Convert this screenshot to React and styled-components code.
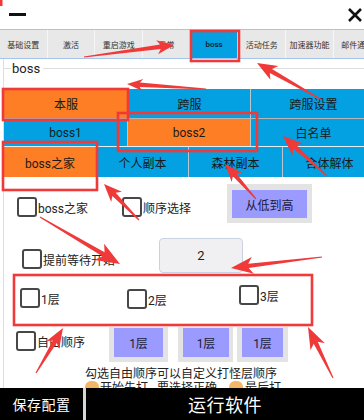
import React from "react";
import styled, { createGlobalStyle } from "styled-components";

const GlobalStyle = createGlobalStyle`
  html, body {
    margin: 0;
    padding: 0;
    background: #fff;
  }
  body {
    font-family: Roboto, "Noto Sans CJK SC", sans-serif;
    color: #222;
  }
`;

const RED = "#f03a3a";
const ORANGE = "#fd7e24";
const BLUE = "#03a0e2";
const PURPLE = "#9a9aff";

const Screen = styled.div`
  position: relative;
  width: 364px;
  height: 420px;
  overflow: hidden;
  display: flex;
  flex-direction: column;
  background: #fff;
`;

const TitleBar = styled.div`
  height: 29px;
  flex: 0 0 29px;
  display: flex;
  align-items: center;
  justify-content: space-between;
  padding: 0 1px 0 9px;
  box-sizing: border-box;
`;

const Minimize = styled.span`
  width: 17px;
  height: 3px;
  margin-top: 0;
  background: #111;
`;

const TabBar = styled.div`
  flex: 0 0 30px;
  height: 30px;
  box-sizing: border-box;
  display: flex;
  background: #e8e8e8;
  border-top: 1px solid #a6c4f0;
  border-bottom: 1px solid #a6c4f0;
  overflow: hidden;
`;

const Tab = styled.div`
  flex: 0 0 47.7px;
  box-sizing: border-box;
  display: flex;
  align-items: center;
  justify-content: center;
  white-space: nowrap;
  font-size: 8px;
  color: #333;
  border-right: 1px solid #f6f6f6;
  background: ${(p) => (p.$active ? BLUE : "transparent")};
  font-weight: ${(p) => (p.$active ? 600 : 400)};
  color: ${(p) => (p.$active ? "#10243a" : "#333")};
`;

const Body = styled.div`
  flex: 1;
  overflow: hidden;
  padding-left: 3px;
`;

const Group = styled.div`
  width: 372px;
  min-height: 100%;
  border-left: 1px solid #dedede;
`;

const Legend = styled.div`
  height: 18px;
  display: flex;
  align-items: center;
  font-size: 13px;
  color: #222;

  &::before {
    content: "";
    width: 7px;
    height: 1px;
    background: #dedede;
  }
  &::after {
    content: "";
    flex: 1;
    height: 1px;
    background: #dedede;
  }
  span {
    padding: 0 3px 0 1px;
  }
`;

const SegRow = styled.div`
  display: grid;
  grid-template-columns: ${(p) => p.$cols};
  height: ${(p) => p.$h}px;
  margin-top: ${(p) => p.$mt || 0}px;
  border-bottom: 1px solid ${(p) => p.$line || "#c8d0d4"};
`;

const Seg = styled.div`
  display: flex;
  align-items: center;
  justify-content: center;
  font-size: 12px;
  color: #1a1a1a;
  background: ${(p) => (p.$on ? ORANGE : BLUE)};
  border-left: ${(p) => (p.$first ? "none" : "1px solid #b9c6cc")};
  white-space: nowrap;
`;

const OptionRow = styled.div`
  display: grid;
  grid-template-columns: ${(p) => p.$cols};
  align-items: start;
  margin-top: ${(p) => p.$mt}px;
  padding-left: ${(p) => p.$pl}px;
`;

const CheckItem = styled.label`
  display: flex;
  align-items: center;
  gap: 1px;
  margin-top: ${(p) => p.$mt || 0}px;
  font-size: 12px;
  color: #222;
  white-space: nowrap;
`;

const Box = styled.span`
  width: 20px;
  height: 20px;
  box-sizing: border-box;
  border: 2px solid #474747;
  border-radius: 3px;
  background: #fff;
  flex: 0 0 auto;
`;

const ActionButton = styled.div`
  width: ${(p) => p.$w}px;
  margin-left: ${(p) => p.$ml || 0}px;
  padding: ${(p) => p.$pad};
  background: #e3e3e3;
  box-sizing: content-box;

  div {
    height: ${(p) => p.$h}px;
    display: flex;
    align-items: center;
    justify-content: center;
    background: ${PURPLE};
    font-size: 12px;
    color: #1b1b3a;
  }
`;

const NumberField = styled.div`
  width: 84px;
  height: 35px;
  box-sizing: border-box;
  display: flex;
  align-items: center;
  justify-content: center;
  background: #f0f0f2;
  border: 1px solid #c8d2e2;
  border-radius: 4px;
  font-size: 13px;
  color: #222;
`;

const FloorArea = styled.div`
  width: 298px;
  height: 50px;
  margin: 2px 0 0 10px;
  display: grid;
  grid-template-columns: 107px 112px 1fr;
  align-items: start;
  padding-left: 6px;
  box-sizing: border-box;
`;

const OrderRow = styled.div`
  display: flex;
  align-items: flex-start;
  margin-top: 2px;
  padding-left: 12px;
`;

const Note = styled.div`
  margin: 5px 0 0 81px;
  font-size: 12px;
  line-height: 14px;
  color: #222;
  white-space: nowrap;
`;

const Hand = styled.span`
  display: inline-block;
  width: 14px;
  height: 12px;
  margin: 0 ${(p) => p.$mr || 1}px 0 ${(p) => p.$ml || 0}px;
  vertical-align: -1px;
  border-radius: 6px 6px 2px 2px;
  background: #f2b766;
`;

const Gap = styled.span`
  display: inline-block;
  width: ${(p) => p.$w}px;
`;

const BottomBar = styled.div`
  flex: 0 0 32px;
  display: flex;
  gap: 3px;
  background: #d6d6d6;
`;

const BottomButton = styled.div`
  flex: ${(p) => (p.$grow ? "1" : "0 0 83px")};
  display: flex;
  align-items: center;
  justify-content: center;
  background: #000;
  color: #fff;
  font-size: ${(p) => p.$fs}px;
  letter-spacing: 0.5px;
`;

const Overlay = styled.svg`
  position: absolute;
  left: 0;
  top: 0;
  pointer-events: none;
`;

const tabs = ["基础设置", "激活", "重启游戏", "日常", "boss", "活动任务", "加速器功能", "邮件通知"];

const marks = [
  { x: 191, y: 31, w: 48, h: 30 },
  { x: 3, y: 89, w: 125, h: 31 },
  { x: 118, y: 113, w: 139, h: 38 },
  { x: 3, y: 142, w: 94, h: 48 },
  { x: 14, y: 275, w: 298, h: 50 },
];

const arrows = [
  { from: [84, 57], to: [174, 45], head: 17, hw: 14 },
  { from: [322, 100], to: [257, 63], head: 20, hw: 16 },
  { from: [206, 89], to: [127, 84], head: 16, hw: 12 },
  { from: [327, 176], to: [283, 136], head: 20, hw: 16 },
  { from: [256, 199], to: [225, 164], head: 18, hw: 14 },
  { from: [139, 220], to: [104, 184], head: 18, hw: 15 },
  { from: [40, 217], to: [120, 264], head: 24, hw: 19 },
  { from: [322, 257], to: [231, 268], head: 22, hw: 17 },
  { from: [36, 373], to: [63, 328], head: 20, hw: 15 },
  { from: [333, 378], to: [308, 327], head: 22, hw: 16 },
];

const arrowPoints = ([x1, y1], [x2, y2], head, headW, neck = 4.5, tail = 1.2) => {
  const len = Math.hypot(x2 - x1, y2 - y1);
  const ux = (x2 - x1) / len;
  const uy = (y2 - y1) / len;
  const nx = -uy;
  const ny = ux;
  const bx = x2 - ux * head;
  const by = y2 - uy * head;
  const cx = x2 - ux * head * 0.8;
  const cy = y2 - uy * head * 0.8;
  return [
    [x1 + (nx * tail) / 2, y1 + (ny * tail) / 2],
    [cx + (nx * neck) / 2, cy + (ny * neck) / 2],
    [bx + (nx * headW) / 2, by + (ny * headW) / 2],
    [x2, y2],
    [bx - (nx * headW) / 2, by - (ny * headW) / 2],
    [cx - (nx * neck) / 2, cy - (ny * neck) / 2],
    [x1 - (nx * tail) / 2, y1 - (ny * tail) / 2],
  ]
    .map((p) => p.map((v) => v.toFixed(1)).join(","))
    .join(" ");
};

const Check = ({ label, mt }) => (
  <CheckItem $mt={mt}>
    <Box />
    {label}
  </CheckItem>
);

const App = () => {
  return (
    <Screen>
      <GlobalStyle />
      <TitleBar>
        <Minimize />
        <svg width="16" height="16" viewBox="0 0 16 16">
          <path d="M2 2 L14 14 M14 2 L2 14" stroke="#111" strokeWidth="2.6" />
        </svg>
      </TitleBar>

      <TabBar>
        {tabs.map((t) => (
          <Tab key={t} $active={t === "boss"}>
            {t}
          </Tab>
        ))}
      </TabBar>

      <Body>
        <Group>
          <Legend>
            <span>boss</span>
          </Legend>

          <SegRow $cols="124px 122px 1fr" $h={29} $mt={12} $line="#b5b5b5">
            <Seg $first $on>本服</Seg>
            <Seg>跨服</Seg>
            <Seg>跨服设置</Seg>
          </SegRow>
          <SegRow $cols="123px 123px 1fr" $h={27} $line="#e4eef3">
            <Seg $first>boss1</Seg>
            <Seg $on>boss2</Seg>
            <Seg>白名单</Seg>
          </SegRow>
          <SegRow $cols="92px 92px 94px 1fr" $h={30} $line="transparent">
            <Seg $first $on>boss之家</Seg>
            <Seg>个人副本</Seg>
            <Seg>森林副本</Seg>
            <Seg>合体解体</Seg>
          </SegRow>

          <OptionRow $cols="105px 105px 85px" $mt={6} $pl={13}>
            <Check label="boss之家" mt={13} />
            <Check label="顺序选择" mt={13} />
            <ActionButton $w={75} $h={28} $pad="6px 5px 5px">
              <div>从低到高</div>
            </ActionButton>
          </OptionRow>

          <OptionRow $cols="137px 84px" $mt={15} $pl={18}>
            <Check label="提前等待开始" mt={11} />
            <NumberField>2</NumberField>
          </OptionRow>

          <FloorArea>
            <Check label="1层" mt={13} />
            <Check label="2层" mt={14} />
            <Check label="3层" mt={10} />
          </FloorArea>

          <OrderRow>
            <CheckItem $mt={4} style={{ width: 93 }}>
              <Box />
              自由顺序
            </CheckItem>
            <ActionButton $w={49} $h={29} $pad="1px 5px 5px">
              <div>1层</div>
            </ActionButton>
            <ActionButton $w={46} $h={29} $pad="1px 4px 5px 5px" $ml={10}>
              <div>1层</div>
            </ActionButton>
            <ActionButton $w={41} $h={29} $pad="1px 5px 5px" $ml={4}>
              <div>1层</div>
            </ActionButton>
          </OrderRow>

          <Note>
            勾选自由顺序可以自定义打怪层顺序
            <br />
            <Hand />
            开始先打
            <Gap $w={9} />
            要选择正确
            <Gap $w={12} />
            <Hand $mr={2} />
            最后打
          </Note>
        </Group>
      </Body>

      <BottomBar>
        <BottomButton $fs={14}>保存配置</BottomButton>
        <BottomButton $grow $fs={18}>运行软件</BottomButton>
      </BottomBar>

      <Overlay width="364" height="420" viewBox="0 0 364 420">
        <rect x="0" y="0" width="2.5" height="6" fill={RED} />
        {marks.map((m, i) => (
          <rect
            key={i}
            x={m.x}
            y={m.y}
            width={m.w}
            height={m.h}
            fill="none"
            stroke={RED}
            strokeWidth="2.6"
          />
        ))}
        {arrows.map((a, i) => (
          <polygon key={i} points={arrowPoints(a.from, a.to, a.head, a.hw)} fill={RED} />
        ))}
      </Overlay>
    </Screen>
  );
};

export default App;
